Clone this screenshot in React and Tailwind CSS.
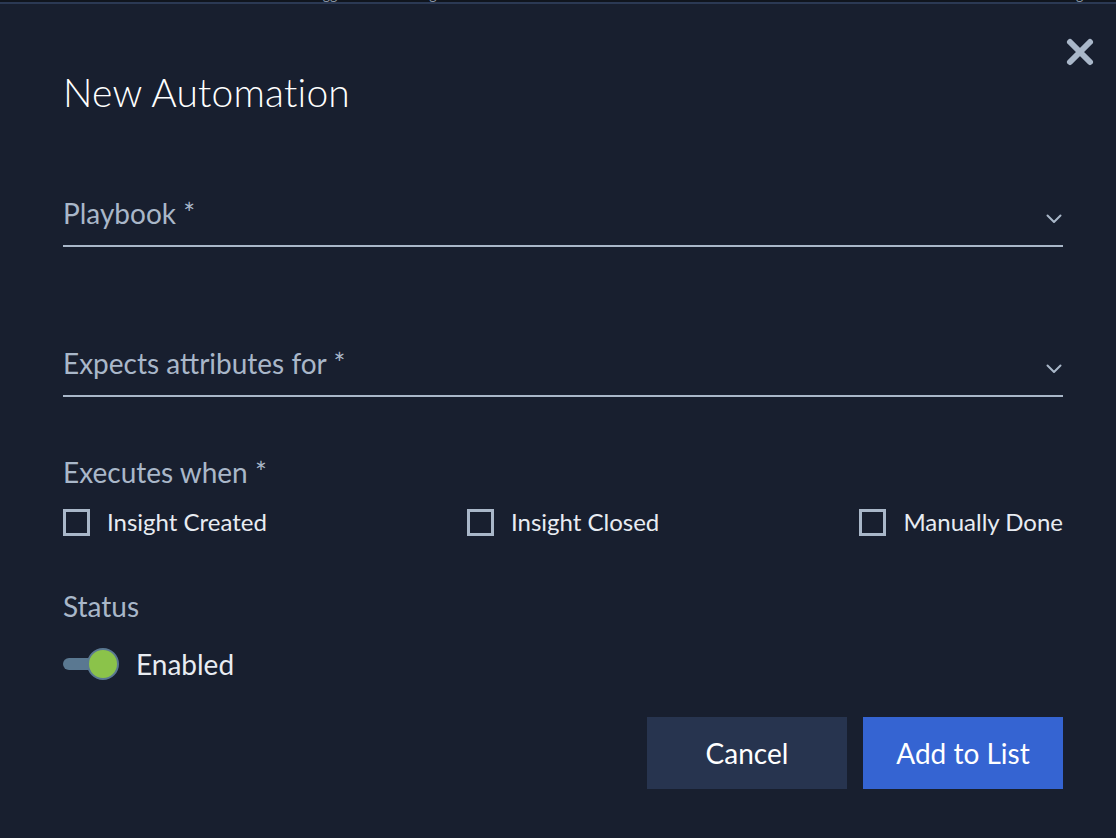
import React, { useState } from 'react';

const font = { fontFamily: 'Lato, "Liberation Sans", sans-serif' };

const Chevron = () => (
    <svg width="16" height="10" viewBox="0 0 16 10" className="shrink-0">
        <path d="M1.5 1.5 L8 8 L14.5 1.5" fill="none" stroke="#a9b7c9" strokeWidth="2" strokeLinecap="round" strokeLinejoin="round" />
    </svg>
);

const SelectField = ({ label }) => (
    <div className="flex items-end justify-between border-b-2 border-[#a9b7c9] pb-[16px]">
        <span className="text-[28px] leading-[32px] text-[#a9b7c9]">{label}</span>
        <span className="mb-[5px] mr-[1px]"><Chevron /></span>
    </div>
);

const Checkbox = ({ label, checked, onToggle }) => (
    <label className="flex items-center gap-[17px] cursor-pointer" onClick={onToggle}>
        <span className="w-[27px] h-[27px] border-[3px] border-[#a9b7c9] flex items-center justify-center">
            {checked && <span className="w-[13px] h-[13px] bg-[#a9b7c9]" />}
        </span>
        <span className="text-[24px] leading-[28px] text-[#e8ecf2]">{label}</span>
    </label>
);

export default function App() {
    const [triggers, setTriggers] = useState({ created: false, closed: false, manual: false });
    const [enabled, setEnabled] = useState(true);

    const toggle = (key) => setTriggers({ ...triggers, [key]: !triggers[key] });

    return (
        <div className="w-[1116px] h-[838px] bg-[#181f2f] overflow-hidden" style={font}>
            {/* page behind the modal, cut off at the top */}
            <div className="h-[2px] bg-[#10151e] overflow-hidden">
                <div className="flex gap-[70px] pl-[4px] -mt-[12px] text-[14px] leading-[14px] text-[#8b95a5] whitespace-nowrap">
                    <span>Automation audit</span>
                    <span>Create a new rule to trigger when an insight is</span>
                    <span className="ml-auto pr-[20px]">Insight</span>
                </div>
            </div>
            <div className="h-[2px] bg-[#2b3954]" />

            <div className="relative pl-[63px] pr-[53px]">
                <button className="absolute right-[20px] top-[32px] w-[32px] h-[32px] flex items-center justify-center">
                    <svg width="30" height="30" viewBox="0 0 30 30">
                        <path d="M5 5 L25 25 M25 5 L5 25" stroke="#a9b7c9" strokeWidth="6" strokeLinecap="round" />
                    </svg>
                </button>

                <h2 className="pt-[64px] text-[39px] leading-[48px] font-light text-white tracking-[0.2px]">New Automation</h2>

                <div className="mt-[81px]">
                    <SelectField label="Playbook *" />
                </div>
                <div className="mt-[100px]">
                    <SelectField label="Expects attributes for *" />
                </div>

                <div className="mt-[59px] text-[28px] leading-[32px] text-[#a9b7c9]">Executes when *</div>
                <div className="mt-[20px] flex justify-between">
                    <Checkbox label="Insight Created" checked={triggers.created} onToggle={() => toggle('created')} />
                    <Checkbox label="Insight Closed" checked={triggers.closed} onToggle={() => toggle('closed')} />
                    <Checkbox label="Manually Done" checked={triggers.manual} onToggle={() => toggle('manual')} />
                </div>

                <div className="mt-[54px] text-[28px] leading-[32px] text-[#a9b7c9]">Status</div>
                <div className="mt-[26px] flex items-center gap-[17px]">
                    <button className="relative w-[56px] h-[32px]" onClick={() => setEnabled(!enabled)}>
                        <span className="absolute left-0 top-[10px] w-[44px] h-[12px] rounded-full bg-[#5a7891]" />
                        <span className={`absolute top-0 w-[32px] h-[32px] rounded-full border-[2px] border-[#5a7891] ${enabled ? 'left-[24px] bg-[#8bc34a]' : 'left-[-2px] bg-[#a9b7c9]'}`} />
                    </button>
                    <span className="text-[28px] leading-[32px] text-[#e8ecf2]">{enabled ? 'Enabled' : 'Disabled'}</span>
                </div>

                <div className="mt-[37px] flex justify-end gap-[16px]">
                    <button className="w-[200px] h-[72px] bg-[#27344f] text-white text-[28px]">Cancel</button>
                    <button className="w-[200px] h-[72px] bg-[#3564d2] text-white text-[28px]">Add to List</button>
                </div>
            </div>
        </div>
    );
}
